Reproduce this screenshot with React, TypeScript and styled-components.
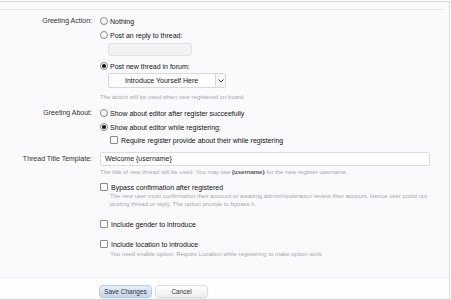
import React from 'react';
import styled, { createGlobalStyle } from 'styled-components';

const GlobalStyle = createGlobalStyle`
  html, body {
    margin: 0;
    padding: 0;
    background: #ffffff;
  }
  body {
    font-family: 'Liberation Sans', Arial, sans-serif;
    font-size: 7px;
    color: #222;
  }
`;

const Panel = styled.div`
  box-sizing: border-box;
  width: 450px;
  height: 299px;
  margin-top: 1px;
  border-top: 1px solid #d8d8dc;
  border-right: 1px solid #dcdce0;
  border-bottom: 1px solid #cfcfd4;
  background: #fafafd;
  overflow: hidden;
  display: flex;
  flex-direction: column;
`;

const TopRule = styled.div`
  height: 1px;
  margin: 7px 6px 0 0;
  background: #e4e4ea;
`;

const Form = styled.div`
  display: flex;
  flex-direction: column;
  padding-top: 6px;
`;

const Row = styled.div<{ $gap?: number }>`
  display: grid;
  grid-template-columns: 92px 1fr;
  column-gap: 8px;
  margin-bottom: ${({ $gap }) => $gap ?? 0}px;
`;

const Label = styled.div<{ $top?: number }>`
  text-align: right;
  color: #333;
  font-size: 7px;
  line-height: 8px;
  padding-top: ${({ $top }) => $top ?? 1}px;
`;

const Controls = styled.div`
  display: flex;
  flex-direction: column;
`;

const Option = styled.label<{ $gap?: number; $indent?: number }>`
  display: flex;
  align-items: center;
  gap: 2px;
  height: 10px;
  margin-left: ${({ $indent }) => $indent ?? 0}px;
  margin-bottom: ${({ $gap }) => $gap ?? 4}px;
  color: #111;
  white-space: nowrap;
`;

const Radio = styled.span<{ $on?: boolean }>`
  box-sizing: border-box;
  width: 8px;
  height: 8px;
  border-radius: 50%;
  border: 1px solid #8c8c8c;
  background: linear-gradient(#ffffff, #f0f0f2);
  display: flex;
  align-items: center;
  justify-content: center;
  flex: none;

  &::after {
    content: '';
    width: 4px;
    height: 4px;
    border-radius: 50%;
    background: ${({ $on }) => ($on ? '#111' : 'transparent')};
  }
`;

const Check = styled.span`
  box-sizing: border-box;
  width: 8px;
  height: 8px;
  border: 1px solid #8c8c8c;
  border-radius: 1px;
  background: #fff;
  flex: none;
  margin-right: 1px;
`;

const TextBox = styled.div<{ $width: number; $plain?: boolean }>`
  box-sizing: border-box;
  width: ${({ $width }) => $width}px;
  height: ${({ $plain }) => ($plain ? 14 : 13)}px;
  border: 1px solid ${({ $plain }) => ($plain ? '#dcdce2' : '#e2e2e6')};
  border-radius: ${({ $plain }) => ($plain ? 2 : 3)}px;
  background: ${({ $plain }) => ($plain ? '#ffffff' : '#f2f2f4')};
  padding: 2px 4px;
  color: #222;
  font-size: 7px;
  line-height: 8px;
`;

const InputIndent = styled.div`
  margin: -1px 0 5px 8px;
`;

const Select = styled.div`
  box-sizing: border-box;
  width: 118px;
  height: 15px;
  margin: -2px 0 5px 8px;
  display: flex;
  border: 1px solid #d8d8dc;
  border-radius: 2px;
  background: #fff;
`;

const SelectValue = styled.div`
  flex: 1;
  display: flex;
  align-items: center;
  padding-left: 16px;
  font-size: 7px;
  color: #111;
`;

const SelectArrow = styled.div`
  width: 9px;
  border-left: 1px solid #d8d8dc;
  display: flex;
  align-items: center;
  justify-content: center;
  background: #f6f6f8;
`;

const Hint = styled.div<{ $indent?: number; $top?: number }>`
  font-size: 6px;
  line-height: 8px;
  color: #a7a7ad;
  margin-left: ${({ $indent }) => $indent ?? 0}px;
  margin-top: ${({ $top }) => $top ?? 0}px;
`;

const Strong = styled.b`
  color: #555;
`;

const Footer = styled.div`
  box-sizing: border-box;
  margin-top: auto;
  height: 22px;
  border-top: 1px solid #ececf2;
  background: #fdfdfe;
  display: flex;
  align-items: flex-end;
  gap: 3px;
  padding: 0 0 1px 99px;
`;

const Button = styled.div<{ $primary?: boolean }>`
  box-sizing: border-box;
  width: 53px;
  height: 13px;
  border-radius: 4px;
  display: flex;
  align-items: center;
  justify-content: center;
  font-size: 6.5px;
  color: #333;
  border: 1px solid ${({ $primary }) => ($primary ? '#b8cde0' : '#dcdce0')};
  background: ${({ $primary }) =>
    $primary
      ? 'linear-gradient(#e4eef8, #c3d6ea)'
      : 'linear-gradient(#ffffff, #ececef)'};
  box-shadow: 0 1px 1px rgba(0, 0, 0, 0.08);
`;

const Chevron = () => (
  <svg width="6" height="4" viewBox="0 0 6 4">
    <path d="M0.5 0.5 L3 3 L5.5 0.5" fill="none" stroke="#444" strokeWidth="1" />
  </svg>
);

const App: React.FC = () => (
  <>
    <GlobalStyle />
    <Panel>
      <TopRule />
      <Form>
        <Row $gap={7}>
          <Label>Greeting Action:</Label>
          <Controls>
            <Option>
              <Radio />
              Nothing
            </Option>
            <Option>
              <Radio />
              Post an reply to thread:
            </Option>
            <InputIndent>
              <TextBox $width={84} />
            </InputIndent>
            <Option>
              <Radio $on />
              Post new thread in forum:
            </Option>
            <Select>
              <SelectValue>Introduce Yourself Here</SelectValue>
              <SelectArrow>
                <Chevron />
              </SelectArrow>
            </Select>
            <Hint>The action will be used when new registered on board.</Hint>
          </Controls>
        </Row>

        <Row $gap={7}>
          <Label>Greeting About:</Label>
          <Controls>
            <Option>
              <Radio />
              Show about editor after register succeefully
            </Option>
            <Option $gap={3}>
              <Radio $on />
              Show about editor while registering:
            </Option>
            <Option $indent={10} $gap={0}>
              <Check />
              Require register provide about their while registering
            </Option>
          </Controls>
        </Row>

        <Row $gap={6}>
          <Label $top={3}>Thread Title Template:</Label>
          <Controls>
            <TextBox $width={330} $plain>
              Welcome {'{username}'}
            </TextBox>
            <Hint $top={2}>
              The title of new thread will be used. You may use <Strong>{'{username}'}</Strong> for
              the new register username.
            </Hint>
          </Controls>
        </Row>

        <Row $gap={11}>
          <Label />
          <Controls>
            <Option $gap={0}>
              <Check />
              Bypass confirmation after registered
            </Option>
            <Hint $indent={10}>
              The new user must confirmation their account or awaiting admin/moderation review their
              account. Hence user could not
              <br />
              posting thread or reply. The option provide to bypass it.
            </Hint>
          </Controls>
        </Row>

        <Row $gap={10}>
          <Label />
          <Controls>
            <Option $gap={0}>
              <Check />
              Include gender to introduce
            </Option>
          </Controls>
        </Row>

        <Row>
          <Label />
          <Controls>
            <Option $gap={0}>
              <Check />
              Include location to introduce
            </Option>
            <Hint $indent={10} $top={1}>
              You need enable option: Require Location while registering to make option work
            </Hint>
          </Controls>
        </Row>
      </Form>
      <Footer>
        <Button $primary>Save Changes</Button>
        <Button>Cancel</Button>
      </Footer>
    </Panel>
  </>
);

export default App;
